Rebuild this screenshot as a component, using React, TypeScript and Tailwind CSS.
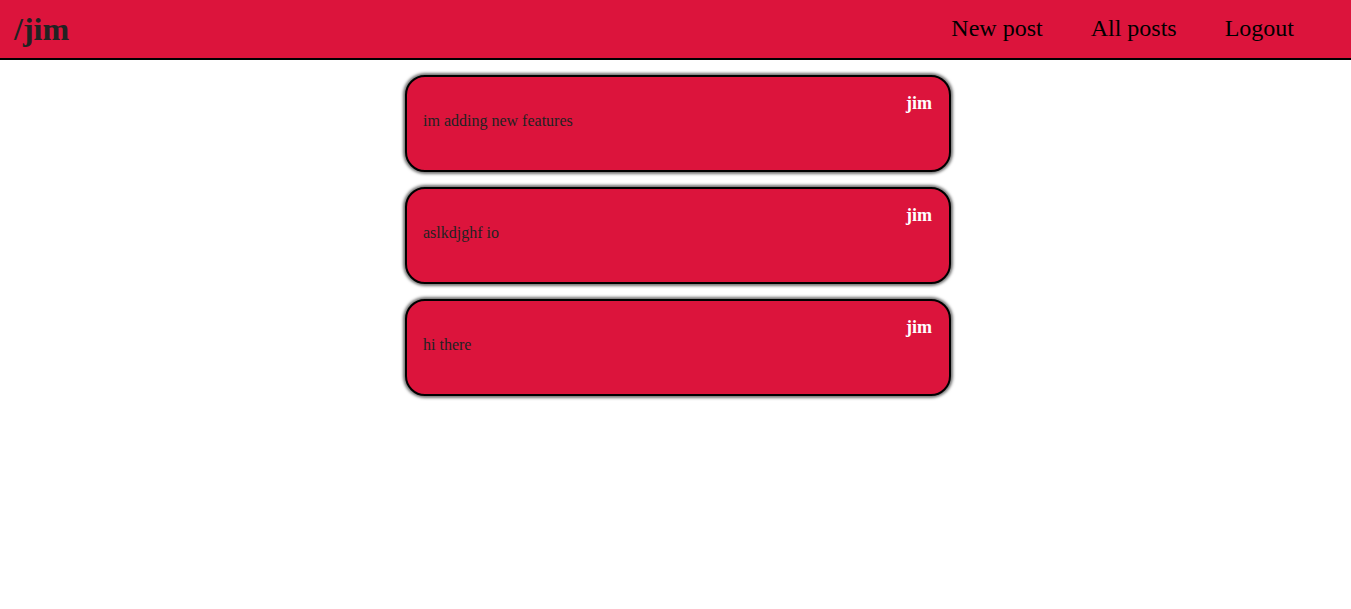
const posts = [
    { id: 1, body: 'im adding new features', author: 'jim' },
    { id: 2, body: 'aslkdjghf io', author: 'jim' },
    { id: 3, body: 'hi there', author: 'jim' },
]

function PostCard({ body, author }: { body: string; author: string }) {
    return (
        <div className="w-[546px] h-[97px] bg-[#dc143c] border-2 border-black rounded-[20px] shadow-[0_0_3px_2px_rgba(0,0,0,0.55)] pl-4 pr-[16px] pt-[15px] flex justify-between">
            <p className="text-[16px] text-[#222] mt-[20px] leading-[18px]">{body}</p>
            <span className="text-[18px] font-bold text-white leading-[20px] mt-[1px] mr-[1px]">{author}</span>
        </div>
    )
}

export default function App() {
    return (
        <div className="min-h-screen bg-white font-['Liberation_Serif',serif]">
            <nav className="h-[60px] bg-[#dc143c] border-b-2 border-black flex items-center justify-between pl-[14px] pr-[57px]">
                <a className="text-[32px] font-bold text-[#222] leading-none">/jim</a>
                <div className="flex gap-[48px] text-[24px] text-black leading-none -mt-[2px]">
                    <a>New post</a>
                    <a>All posts</a>
                    <a>Logout</a>
                </div>
            </nav>
            <main className="flex flex-col items-center gap-[15px] pt-[15px] pl-[5px]">
                {posts.map((p) => (
                    <PostCard key={p.id} body={p.body} author={p.author} />
                ))}
            </main>
        </div>
    )
}
